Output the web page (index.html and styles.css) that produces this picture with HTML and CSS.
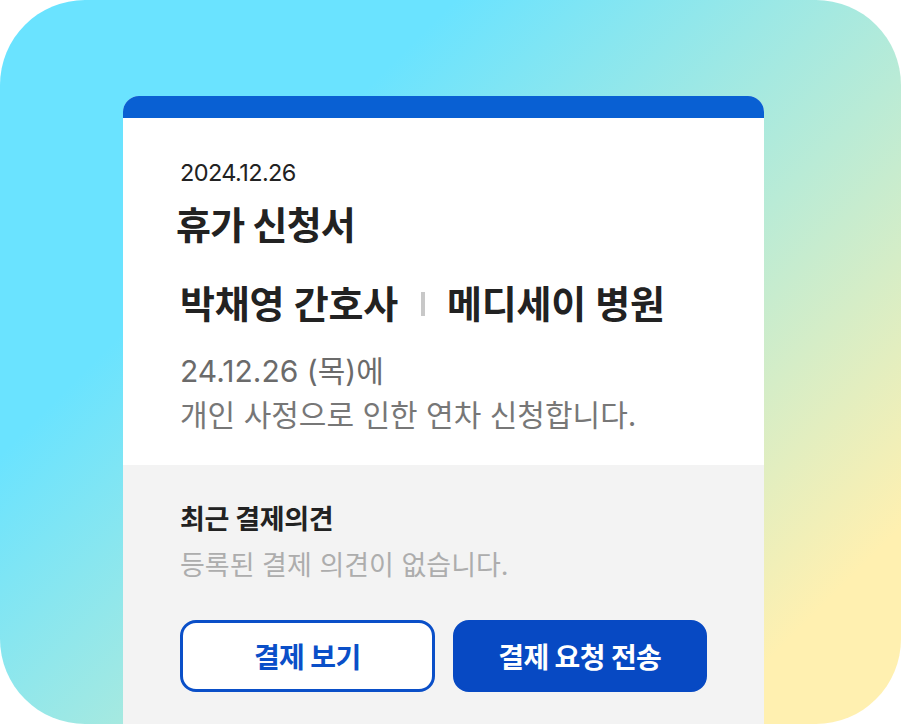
FILE: index.html
```html
<!DOCTYPE html>
<html lang="ko">
<head>
  <meta charset="UTF-8" />
  <meta name="viewport" content="width=device-width, initial-scale=1.0"/>
  <title>휴가 신청서</title>
  <link rel="stylesheet" href="styles.css">
</head>
<body>

  <div class="frame">
    <div class="card">
      <div class="card-bar"></div>

      <div class="card-body">
        <p class="date">2024.12.26</p>
        <h1 class="title">휴가 신청서</h1>
        <p class="who">박채영 간호사<span class="sep"></span>메디세이 병원</p>
        <p class="desc">24.12.26 (목)에</p>
        <p class="desc">개인 사정으로 인한 연차 신청합니다.</p>
      </div>

      <div class="card-foot">
        <h2 class="foot-title">최근 결제의견</h2>
        <p class="foot-empty">등록된 결제 의견이 없습니다.</p>
        <div class="actions">
          <button class="btn btn-line">결제 보기</button>
          <button class="btn btn-fill">결제 요청 전송</button>
        </div>
      </div>
    </div>
  </div>

</body>
</html>
```

FILE: styles.css
```css
body {
  margin: 0;
  background: #fff;
  font-family: Inter, "Noto Sans CJK KR", sans-serif;
}
p, h1, h2 {
  margin: 0;
}
.frame {
  width: 901px;
  height: 724px;
  box-sizing: border-box;
  padding: 96px 137px 0 123px;
  border-radius: 85px;
  overflow: hidden;
  background: linear-gradient(135deg, #6ae3ff 28%, #b9ebd6 60%, #fff0b0 88%);
}
.card {
  height: 660px;
  border-radius: 16px 16px 0 0;
  overflow: hidden;
  background: #f3f3f3;
}
.card-bar {
  height: 22px;
  background: #0960d3;
}
.card-body {
  background: #fff;
  padding: 41px 57px 30px;
}
.date {
  font-size: 23.5px;
  line-height: 28px;
  color: #222;
  letter-spacing: -0.6px;
}
.title {
  margin-top: 16px;
  margin-left: -4px;
  font-size: 38px;
  line-height: 44px;
  font-weight: 700;
  color: #222;
  letter-spacing: -0.8px;
}
.who {
  margin-top: 35px;
  font-size: 38px;
  line-height: 44px;
  font-weight: 600;
  color: #222;
  display: flex;
  align-items: center;
  letter-spacing: -0.2px;
}
.sep {
  width: 4px;
  height: 24px;
  margin: 0 22px 0 23px;
  background: #c8c8c8;
}
.desc {
  font-size: 30px;
  line-height: 40px;
  color: #777;
  letter-spacing: 0;
}
.who + .desc {
  margin-top: 25px;
  color: #6b6b6b;
}
.desc + .desc {
  margin-top: 4px;
}
.card-foot {
  padding: 39px 57px 0;
}
.foot-title {
  font-size: 27px;
  line-height: 32px;
  font-weight: 700;
  color: #222;
  letter-spacing: -0.3px;
}
.foot-empty {
  margin-top: 13px;
  font-size: 27px;
  line-height: 34px;
  color: #adadad;
  letter-spacing: 0;
}
.actions {
  display: flex;
  gap: 18px;
  margin-top: 37px;
}
.btn {
  flex: 1 1 0;
  height: 72px;
  padding: 0;
  border-radius: 16px;
  font-family: inherit;
  font-size: 28px;
  font-weight: 700;
  letter-spacing: -0.6px;
}
.btn-line {
  background: #fff;
  border: 3px solid #0a4fc8;
  color: #0a4fc8;
}
.btn-fill {
  background: #0749c3;
  border: 3px solid #0749c3;
  color: #fff;
}
```
